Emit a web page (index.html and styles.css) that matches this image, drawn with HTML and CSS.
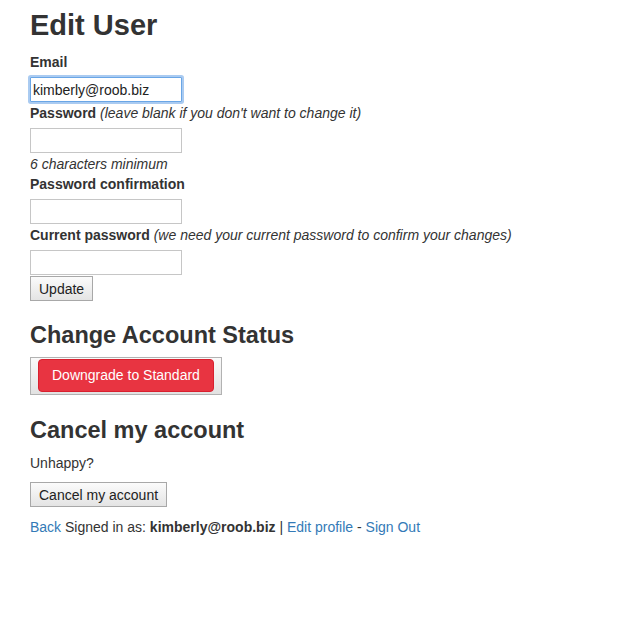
FILE: index.html
```html
<!DOCTYPE html>
<html>
<head>
<meta charset="utf-8">
<title>Edit User</title>
<link rel="stylesheet" href="styles.css">
</head>
<body>
<h1 class="title">Edit User</h1>
<form class="form">
  <label class="lbl">Email</label>
  <input class="input input-focus" type="email" value="kimberly@roob.biz">
  <label class="lbl">Password <i class="note">(leave blank if you don't want to change it)</i></label>
  <input class="input" type="password">
  <i class="hint">6 characters minimum</i>
  <label class="lbl">Password confirmation</label>
  <input class="input" type="password">
  <label class="lbl">Current password <i class="note">(we need your current password to confirm your changes)</i></label>
  <input class="input" type="password">
  <div class="row"><button class="btn-plain" type="button">Update</button></div>
</form>
<h3 class="sub sub-first">Change Account Status</h3>
<div class="row"><button class="btn-wrap" type="button"><span class="btn-danger">Downgrade to Standard</span></button></div>
<h3 class="sub sub-second">Cancel my account</h3>
<p class="para">Unhappy?</p>
<div class="row row-cancel"><button class="btn-plain" type="button">Cancel my account</button></div>
<p class="footer"><a class="link" href="#">Back</a> Signed in as: <b class="strong">kimberly@roob.biz</b> | <a class="link" href="#">Edit profile</a> - <a class="link" href="#">Sign Out</a></p>
</body>
</html>
```
FILE: styles.css
```css
html, body {
  margin: 0;
  background: #fff;
}
body {
  padding: 0 30px;
  font-family: "Liberation Sans", Arial, sans-serif;
  font-size: 14px;
  line-height: 20px;
  color: #333;
}
.title {
  font-size: 29px;
  font-weight: 700;
  line-height: 32px;
  margin: 9px 0 11px;
}
.form {
  display: flex;
  flex-direction: column;
  align-items: flex-start;
  margin: 0;
}
.lbl {
  display: block;
  font-weight: 700;
  line-height: 20px;
  margin-bottom: 5px;
}
.note {
  font-weight: 400;
  font-style: italic;
}
.hint {
  display: block;
  font-style: italic;
  line-height: 20px;
}
.input {
  display: block;
  box-sizing: border-box;
  width: 152px;
  height: 25px;
  margin: 0 0 1px;
  padding: 0 2px;
  border: 1px solid #c6c6c6;
  font-family: inherit;
  font-size: 14px;
  color: #222;
  background: #fff;
  outline: none;
}
.input-focus {
  border-color: #6aa6e6;
  box-shadow: 0 0 0 2px rgba(100, 160, 230, 0.55);
  border-radius: 1px;
}
.row {
  display: flex;
}
.btn-plain {
  box-sizing: border-box;
  height: 25px;
  padding: 0 8px;
  border: 1px solid #a8a8a8;
  background: linear-gradient(#fbfbfb, #e4e4e4);
  font-family: inherit;
  font-size: 14px;
  color: #222;
  border-radius: 0;
}
.sub {
  font-size: 23.5px;
  font-weight: 700;
  line-height: 26px;
}
.sub-first {
  margin: 21px 0 9px;
}
.sub-second {
  margin: 22px 0 10px;
}
.btn-wrap {
  box-sizing: border-box;
  padding: 1px 7px 2px;
  border: 1px solid #b2b2b2;
  background: linear-gradient(#fafafa, #e2e2e2);
  font-family: inherit;
  display: flex;
}
.btn-danger {
  display: block;
  box-sizing: border-box;
  height: 33px;
  padding: 0 13px;
  line-height: 31px;
  border: 1px solid #d9202f;
  border-radius: 4px;
  background: #e83441;
  color: #fff;
  font-size: 14px;
}
.para {
  margin: 0 0 9px;
}
.row-cancel {
  margin-bottom: 10px;
}
.footer {
  margin: 0;
}
.link {
  color: #337ab7;
  text-decoration: none;
}
.strong {
  font-weight: 700;
}
```
